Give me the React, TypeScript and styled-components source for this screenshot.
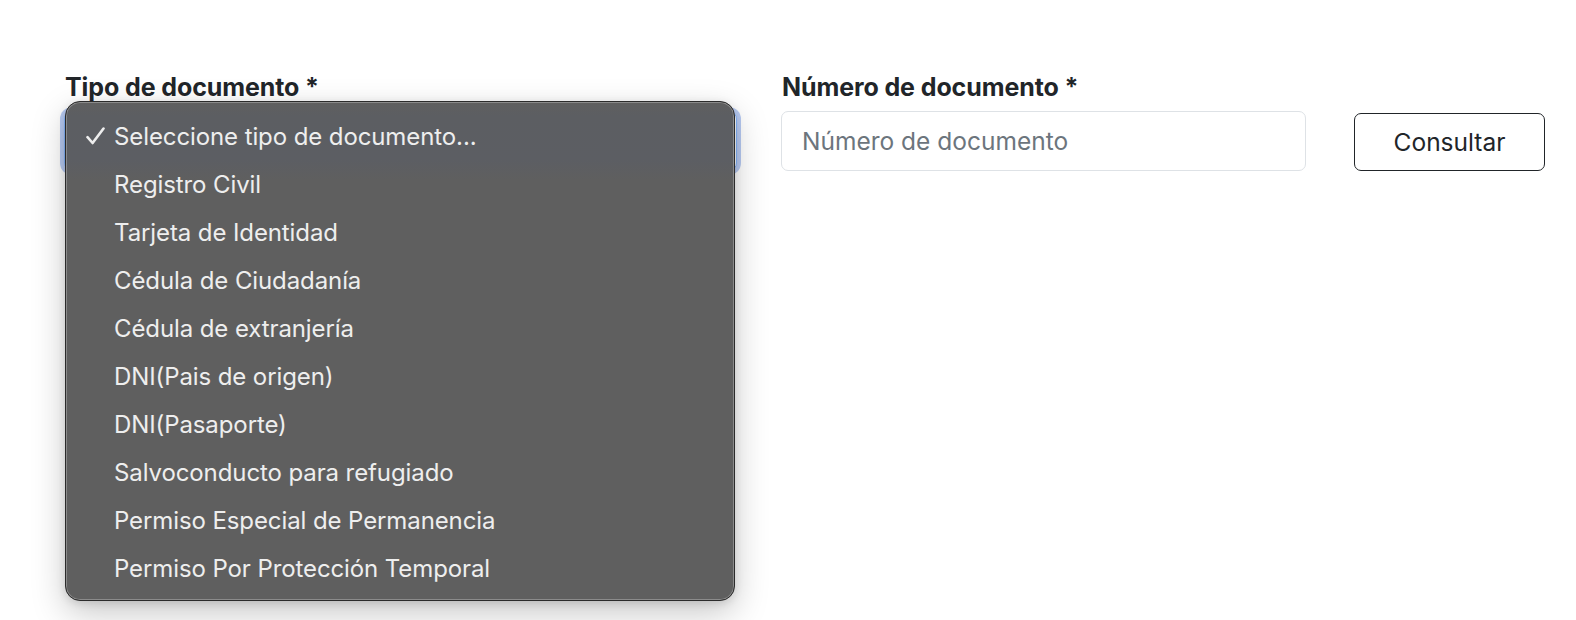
import React from "react";
import styled, { createGlobalStyle } from "styled-components";

const GlobalStyle = createGlobalStyle`
  html, body { margin: 0; padding: 0; background: #ffffff; }
  body { font-family: Inter, "Noto Sans", "Liberation Sans", sans-serif; color: #212529; }
  * { box-sizing: border-box; }
`;

const Page = styled.div`
  width: 1576px;
  height: 620px;
  padding: 72px 0 0 64px;
  overflow: hidden;
`;

const Row = styled.div`
  display: flex;
  align-items: flex-end;
`;

const Field = styled.div<{ $width: number; $offset?: number }>`
  display: flex;
  flex-direction: column;
  flex-shrink: 0;
  width: ${(p) => p.$width}px;
  margin-left: ${(p) => p.$offset ?? 0}px;
`;

const Label = styled.label`
  font-size: 25px;
  font-weight: 700;
  line-height: 30px;
  letter-spacing: -0.1px;
  color: #212529;
  margin-bottom: 9px;
  padding-left: 1px;
`;

const SelectWrap = styled.div`
  position: relative;
  height: 60px;
`;

const SelectBox = styled.div`
  height: 60px;
  border: 1px solid #86b7fe;
  border-radius: 8px;
  background: #ffffff;
  box-shadow: 0 0 0 4px #b8cbf3;
`;

const Menu = styled.div`
  position: absolute;
  top: -10px;
  left: 1px;
  width: 670px;
  padding: 10px 0 8px;
  border-radius: 15px;
  border: 1px solid #2b2b2b;
  background:
    linear-gradient(
      to bottom,
      rgba(92, 94, 98, 0) 0px,
      rgba(92, 94, 98, 1) 14px,
      rgba(92, 94, 99, 1) 58px,
      rgba(95, 95, 95, 0) 78px
    ),
    #5f5f5f;
  box-shadow:
    inset 0 0 0 1px rgba(255, 255, 255, 0.28),
    0 12px 34px rgba(0, 0, 0, 0.22),
    0 2px 8px rgba(0, 0, 0, 0.12);
  z-index: 10;
`;

const Option = styled.div`
  display: flex;
  align-items: center;
  height: 48px;
  padding-left: 20px;
  font-size: 24px;
  color: #eeeeee;
  letter-spacing: -0.1px;
  white-space: nowrap;
`;

const CheckCell = styled.span`
  display: inline-flex;
  align-items: center;
  width: 28px;
  height: 20px;
`;

const Input = styled.input`
  height: 60px;
  width: 100%;
  border: 1px solid #dee2e6;
  border-radius: 7px;
  padding: 0 20px;
  font-family: Inter, "Noto Sans", "Liberation Sans", sans-serif;
  font-size: 24.5px;
  color: #212529;
  background: #ffffff;
  outline: none;
  &::placeholder {
    color: #6c757d;
    opacity: 1;
  }
`;

const Button = styled.button`
  flex-shrink: 0;
  height: 58px;
  width: 191px;
  margin-left: 48px;
  border: 1px solid #212529;
  border-radius: 7px;
  background: #ffffff;
  font-family: Inter, "Noto Sans", "Liberation Sans", sans-serif;
  font-size: 24.5px;
  color: #212529;
  cursor: pointer;
`;

const options = [
  "Seleccione tipo de documento...",
  "Registro Civil",
  "Tarjeta de Identidad",
  "Cédula de Ciudadanía",
  "Cédula de extranjería",
  "DNI(Pais de origen)",
  "DNI(Pasaporte)",
  "Salvoconducto para refugiado",
  "Permiso Especial de Permanencia",
  "Permiso Por Protección Temporal",
];

const Check = () => (
  <svg width="19" height="18" viewBox="0 0 19 18" fill="none">
    <path
      d="M1.5 10.2 L6.6 16 L17.5 1.5"
      stroke="#eeeeee"
      strokeWidth="2.6"
      strokeLinecap="round"
      strokeLinejoin="round"
    />
  </svg>
);

export default function App() {
  return (
    <>
      <GlobalStyle />
      <Page>
        <Row>
          <Field $width={673}>
            <Label>Tipo de documento *</Label>
            <SelectWrap>
              <SelectBox />
              <Menu>
                {options.map((o, i) => (
                  <Option key={o}>
                    <CheckCell>{i === 0 ? <Check /> : null}</CheckCell>
                    {o}
                  </Option>
                ))}
              </Menu>
            </SelectWrap>
          </Field>
          <Field $width={525} $offset={44}>
            <Label>Número de documento *</Label>
            <Input placeholder="Número de documento" />
          </Field>
          <Button>Consultar</Button>
        </Row>
      </Page>
    </>
  );
}
